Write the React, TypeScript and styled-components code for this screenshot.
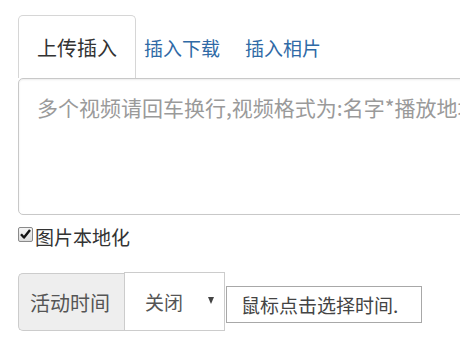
import React from "react";
import styled, { createGlobalStyle } from "styled-components";

const Global = createGlobalStyle`
  html, body { margin: 0; padding: 0; background: #fff; overflow: hidden; }
  body { font-family: "Noto Sans CJK SC", "Noto Sans", sans-serif; }
`;

const Page = styled.div`
  width: 460px;
  height: 349px;
  padding: 15px 0 0 18px;
  box-sizing: border-box;
  overflow: hidden;
`;

const TabBar = styled.div`
  display: flex;
  align-items: center;
  height: 63px;
`;

const Tab = styled.div`
  box-sizing: border-box;
  height: 63px;
  width: 118px;
  display: flex;
  align-items: center;
  justify-content: center;
  border: 1px solid #d6d6d6;
  border-bottom: none;
  border-radius: 5px 5px 0 0;
  font-size: 20px;
  color: #333;
  padding-top: 1px;
`;

const Link = styled.a<{ $first?: boolean }>`
  font-size: 19px;
  color: #2f6aa6;
  text-decoration: none;
  margin-left: ${(p) => (p.$first ? "8px" : "25px")};
  line-height: 1;
  padding-top: 2px;
`;

const Area = styled.textarea`
  display: block;
  box-sizing: border-box;
  width: 520px;
  height: 137px;
  margin: 0;
  border: 1px solid #c8c8c8;
  border-radius: 5px;
  box-shadow: inset 0 1px 2px rgba(0, 0, 0, 0.08);
  padding: 14px 18px;
  font-family: "Noto Sans CJK SC", "Noto Sans", sans-serif;
  font-size: 21px;
  line-height: 28px;
  resize: none;
  outline: none;
  &::placeholder { color: #9a9a9a; }
`;

const CheckRow = styled.label`
  display: flex;
  align-items: center;
  margin-top: 7px;
  font-size: 19px;
  color: #333;
  height: 28px;
`;

const Box = styled.span`
  box-sizing: border-box;
  width: 15px;
  height: 15px;
  border: 1px solid #8a8a8a;
  border-radius: 2px;
  background: linear-gradient(#f4f4f4, #dcdcdc);
  display: flex;
  align-items: center;
  justify-content: center;
  margin-right: 2px;
  margin-top: -4px;
`;

const TimeRow = styled.div`
  display: flex;
  align-items: center;
  margin-top: 23px;
`;

const Addon = styled.div`
  box-sizing: border-box;
  width: 106px;
  height: 58px;
  background: #eeeeee;
  border: 1px solid #cccccc;
  border-right: none;
  border-radius: 5px 0 0 5px;
  display: flex;
  align-items: center;
  padding-left: 11px;
  font-size: 20px;
  color: #555;
`;

const Select = styled.div`
  box-sizing: border-box;
  width: 101px;
  height: 59px;
  border: 1px solid #cccccc;
  background: #fff;
  display: flex;
  align-items: center;
  padding-left: 20px;
  font-size: 19px;
  color: #555;
  position: relative;
  margin-top: -1px;
`;

const Arrow = styled.span`
  position: absolute;
  right: 10px;
  top: 24px;
  width: 0;
  height: 0;
  border-left: 3.5px solid transparent;
  border-right: 3.5px solid transparent;
  border-top: 7px solid #444;
`;

const TimeInput = styled.div`
  box-sizing: border-box;
  width: 196px;
  height: 37px;
  margin-left: 1px;
  margin-top: 4px;
  border: 1px solid #a8a8a8;
  display: flex;
  align-items: center;
  padding-left: 14px;
  font-size: 19px;
  color: #444;
`;

export default function App() {
  return (
    <Page>
      <Global />
      <TabBar>
        <Tab>上传插入</Tab>
        <Link $first href="#">插入下载</Link>
        <Link href="#">插入相片</Link>
      </TabBar>
      <Area placeholder="多个视频请回车换行,视频格式为:名字*播放地址" />
      <CheckRow>
        <Box>
          <svg width="11" height="10" viewBox="0 0 11 10">
            <path d="M1 5.2 L4 8.5 L10 1" fill="none" stroke="#111" strokeWidth="2.4" strokeLinejoin="round" />
          </svg>
        </Box>
        图片本地化
      </CheckRow>
      <TimeRow>
        <Addon>活动时间</Addon>
        <Select>
          关闭
          <Arrow />
        </Select>
        <TimeInput>鼠标点击选择时间.</TimeInput>
      </TimeRow>
    </Page>
  );
}
